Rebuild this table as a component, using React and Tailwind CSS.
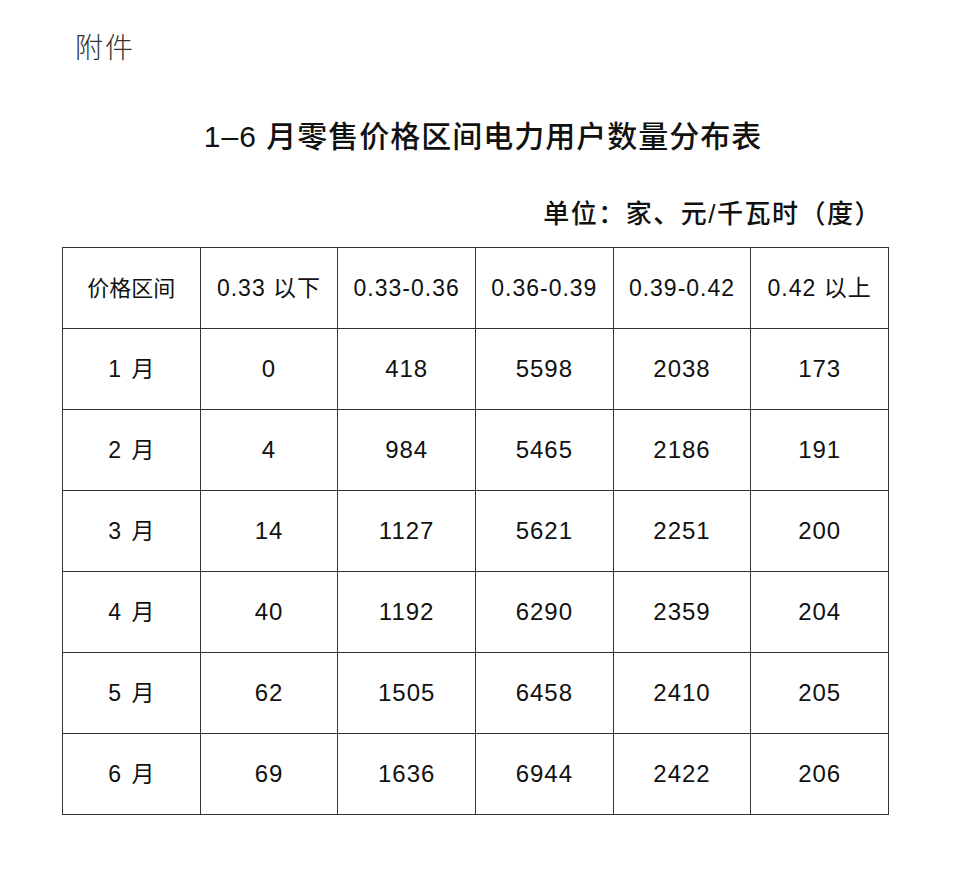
import React from 'react';

const headers = ['价格区间', '0.33 以下', '0.33-0.36', '0.36-0.39', '0.39-0.42', '0.42 以上'];

const rows = [
    ['1 月', '0', '418', '5598', '2038', '173'],
    ['2 月', '4', '984', '5465', '2186', '191'],
    ['3 月', '14', '1127', '5621', '2251', '200'],
    ['4 月', '40', '1192', '6290', '2359', '204'],
    ['5 月', '62', '1505', '6458', '2410', '205'],
    ['6 月', '69', '1636', '6944', '2422', '206'],
];

const App = () => {
    const font = { fontFamily: '"Liberation Sans", "Noto Sans CJK SC", sans-serif' };

    return (
        <div className="w-[960px] h-[878px] bg-white text-[#111]" style={font}>
            {/* attachment label */}
            <div className="pt-[35px] pl-[75px] text-[28px] leading-[28px] font-light tracking-[2px] text-[#333]">附件</div>

            {/* title */}
            <div className="mt-[59px] text-center text-[30px] leading-[30px] font-medium tracking-[1px] pl-[6px]">
                1–6 月零售价格区间电力用户数量分布表
            </div>

            {/* unit */}
            <div className="mt-[49px] pr-[78px] text-right text-[26px] leading-[26px] font-medium tracking-[1.5px]">
                单位：家、元/千瓦时（度）
            </div>

            {/* table */}
            <div className="mt-[20px] ml-[62px] w-[827px] grid grid-cols-6 border-t border-l border-[#333]">
                {headers.map((h, i) => (
                    <div
                        key={'h' + i}
                        className={`h-[81px] flex items-center justify-center border-r border-b border-[#333] ${i === 0 ? 'text-[22px]' : 'text-[23px] tracking-[1px]'}`}
                    >
                        {h}
                    </div>
                ))}
                {rows.map((r, ri) =>
                    r.map((c, ci) => (
                        <div
                            key={ri + '-' + ci}
                            className={`h-[81px] flex items-center justify-center border-r border-b border-[#333] ${ci === 0 ? 'text-[23px] tracking-[2px] pl-[2px]' : 'text-[24px] tracking-[1px]'}`}
                        >
                            {c}
                        </div>
                    ))
                )}
            </div>
        </div>
    );
};

export default App;
